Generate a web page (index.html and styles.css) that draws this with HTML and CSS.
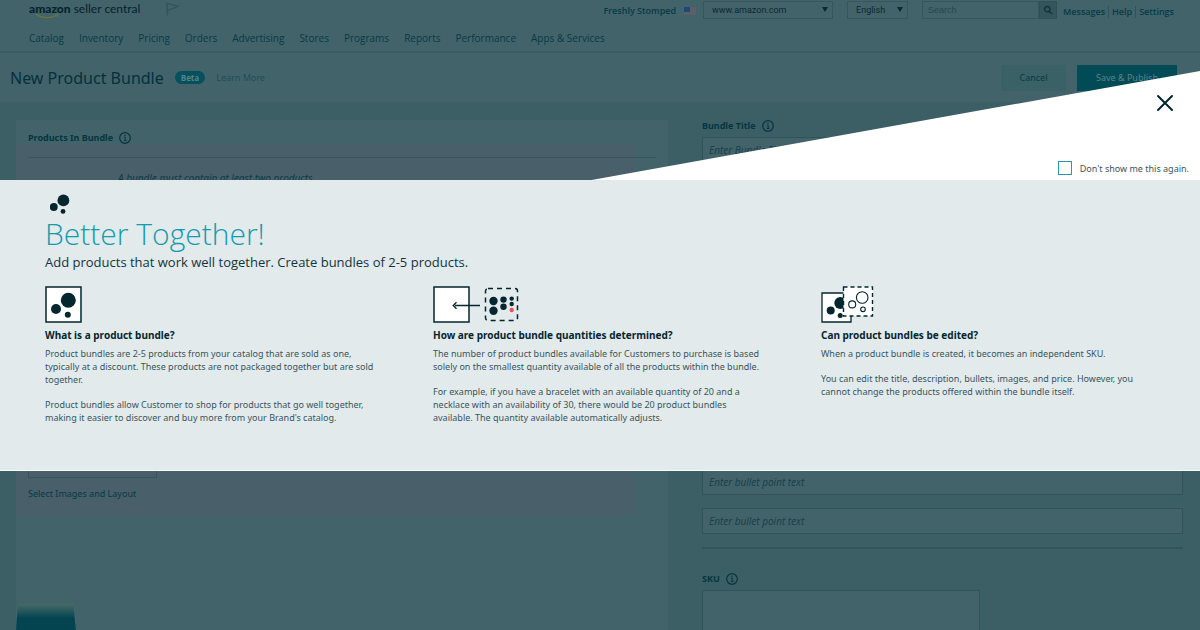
FILE: index.html
```html
<!DOCTYPE html>
<html lang="en">
<head>
<meta charset="utf-8">
<title>New Product Bundle</title>
<link rel="stylesheet" href="styles.css">
</head>
<body>
<svg class="defs" aria-hidden="true">
  <symbol id="info" viewBox="0 0 12 12">
    <circle cx="6" cy="6" r="5.3" fill="none" stroke="currentColor" stroke-width="1.2"/>
    <path d="M5 5.2h1.2V8.6M4.9 8.6h2.5" fill="none" stroke="currentColor"/>
    <circle cx="6" cy="3.3" r=".7" fill="currentColor"/>
  </symbol>
</svg>

<div class="page">
  <header class="header">
    <div class="topbar">
      <a class="logo" href="#"><b>amazon</b> <span>seller central</span>
        <svg class="smile" viewBox="0 0 25 6" aria-hidden="true"><path d="M1 1.2C7 5.6 16 5.8 21.5 2.2" fill="none" stroke="currentColor" stroke-width="1.3"/><path d="M19.5 1.2l3.4-.2-.6 3" fill="none" stroke="currentColor"/></svg>
      </a>
      <svg class="flag" viewBox="0 0 13 14" aria-hidden="true"><path d="M1.2 13.5V1.2L12 4.5 1.2 8.6" fill="none" stroke="currentColor" stroke-width="1.4"/></svg>
      <div class="tools">
        <b class="store">Freshly Stomped</b>
        <svg class="us" viewBox="0 0 12 8" aria-hidden="true"><path fill="#6d5964" d="M0 0h12v8H0z"/><path stroke="#54616b" d="M0 1.5h12M0 3.5h12M0 5.5h12M0 7.5h12"/><path fill="#1c4a76" d="M0 0h6v5H0z"/></svg>
        <span class="pick pick-site"><select aria-label="Marketplace"><option>www.amazon.com</option></select></span>
        <span class="pick pick-lang"><select aria-label="Language"><option>English</option></select></span>
        <form class="search">
          <input type="text" placeholder="Search" aria-label="Search">
          <button type="button" aria-label="Search"><svg viewBox="0 0 10 10"><circle cx="4.2" cy="4.2" r="2.7" fill="none" stroke="currentColor" stroke-width="1.4"/><path d="M6.2 6.2L9 9" stroke="currentColor" stroke-width="1.6"/></svg></button>
        </form>
        <div class="links"><a href="#">Messages</a><a href="#">Help</a><a href="#">Settings</a></div>
      </div>
    </div>
    <nav class="nav">
      <a href="#">Catalog</a><a href="#">Inventory</a><a href="#">Pricing</a><a href="#">Orders</a><a href="#">Advertising</a><a href="#">Stores</a><a href="#">Programs</a><a href="#">Reports</a><a href="#">Performance</a><a href="#">Apps &amp; Services</a>
    </nav>
  </header>

  <div class="titlebar">
    <h1>New Product Bundle</h1>
    <span class="beta">Beta</span>
    <a class="learn" href="#">Learn More</a>
    <button class="btn cancel" type="button">Cancel</button>
    <button class="btn publish" type="button">Save &amp; Publish</button>
  </div>

  <main class="main">
    <section class="card">
      <h2>Products In Bundle <svg class="info"><use href="#info"/></svg></h2>
      <p class="hint">A bundle must contain at least two products.</p>
      <div class="images">
        <div class="image-box"></div>
        <a href="#">Select Images and Layout</a>
      </div>
      <div class="thumb"></div>
    </section>
    <section class="form">
      <label class="label" for="title">Bundle Title <svg class="info"><use href="#info"/></svg></label>
      <input class="field" id="title" type="text" placeholder="Enter Bundle Title">
      <div class="bullets">
        <input class="field" type="text" placeholder="Enter bullet point text" aria-label="Bullet point 1">
        <input class="field" type="text" placeholder="Enter bullet point text" aria-label="Bullet point 2">
      </div>
      <hr>
      <label class="label" for="sku">SKU <svg class="info"><use href="#info"/></svg></label>
      <textarea class="field sku" id="sku"></textarea>
    </section>
  </main>
</div>

<div class="modal" role="dialog" aria-labelledby="headline">
  <div class="wedge">
    <button class="close" type="button" aria-label="Close"><svg viewBox="0 0 18 18"><path d="M2 2l14 14M16 2L2 16" stroke="currentColor" stroke-width="2" stroke-linecap="round"/></svg></button>
    <label class="again"><input type="checkbox"> Don't show me this again.</label>
  </div>
  <div class="panel">
    <svg class="dots" viewBox="0 0 20 20" aria-hidden="true"><circle cx="13.4" cy="6.4" r="5.9"/><circle cx="3.8" cy="13" r="3.9"/><circle cx="13" cy="17.4" r="2.4"/></svg>
    <h2 id="headline">Better Together!</h2>
    <p class="lead">Add products that work well together. Create bundles of 2-5 products.</p>
    <div class="columns">
      <section>
        <svg class="art" viewBox="0 0 60 37" aria-hidden="true"><path d="M1 1h35v35H1z" fill="#fff" stroke="#04262e" stroke-width="1.5"/><circle cx="23.3" cy="14.3" r="7.5"/><circle cx="11" cy="23" r="5"/><circle cx="22.8" cy="28.8" r="3"/></svg>
        <h3>What is a product bundle?</h3>
        <p>Product bundles are 2-5 products from your catalog that are sold as one,<br>typically at a discount. These products are not packaged together but are sold<br>together.</p>
        <p>Product bundles allow Customer to shop for products that go well together,<br>making it easier to discover and buy more from your Brand's catalog.</p>
      </section>
      <section>
        <svg class="art wide" viewBox="0 0 90 37" aria-hidden="true"><path d="M1 1h35v35H1z" fill="#fff" stroke="#04262e" stroke-width="1.5"/><path d="M47 19.5H22M23.5 16.3l-3.3 3.2 3.3 3.2" fill="none" stroke="#04262e" stroke-width="1.3"/><rect x="52.5" y="2.5" width="32" height="32" rx="2.5" fill="none" stroke="#04262e" stroke-width="1.5" stroke-dasharray="5 4"/><circle cx="60.5" cy="15" r="4.2"/><circle cx="60.5" cy="24.8" r="4.2"/><circle cx="70.5" cy="13.6" r="3.2"/><circle cx="70.5" cy="20.8" r="3.2"/><circle cx="78.7" cy="12.6" r="2.2"/><circle cx="78.7" cy="18" r="2.2"/><circle class="low" cx="78.7" cy="24" r="2.2"/></svg>
        <h3>How are product bundle quantities determined?</h3>
        <p>The number of product bundles available for Customers to purchase is based<br>solely on the smallest quantity available of all the products within the bundle.</p>
        <p>For example, if you have a bracelet with an available quantity of 20 and a<br>necklace with an availability of 30, there would be 20 product bundles<br>available. The quantity available automatically adjusts.</p>
      </section>
      <section>
        <svg class="art" viewBox="0 0 60 37" aria-hidden="true"><path d="M1 7h29v29H1z" fill="#fff" stroke="#04262e" stroke-width="1.3"/><circle cx="19.3" cy="17" r="6"/><circle cx="9.7" cy="24.6" r="4"/><circle cx="19.2" cy="29.4" r="2.5"/><path d="M22.5 1h29v29h-29z" fill="#fff" stroke="#04262e" stroke-width="1.4" stroke-dasharray="4 3"/><g fill="none" stroke="#04262e"><circle cx="41.2" cy="11.5" r="5.8" stroke-width="1.1"/><circle cx="31.2" cy="18.4" r="3.5" stroke-width="1.1"/><circle cx="42" cy="23.3" r="2.3" stroke-width="1.1"/></g></svg>
        <h3>Can product bundles be edited?</h3>
        <p>When a product bundle is created, it becomes an independent SKU.</p>
        <p>You can edit the title, description, bullets, images, and price. However, you<br>cannot change the products offered within the bundle itself.</p>
      </section>
    </div>
  </div>
</div>
</body>
</html>
```

FILE: styles.css
```css
* { box-sizing: border-box; }
body {
  margin: 0;
  position: relative;
  height: 100vh;
  overflow: hidden;
  background: #3c5f66;
  color: #063b47;
  font: 9px/13px "Noto Sans", "Open Sans", sans-serif;
}
h1, h2, h3, p { margin: 0; }
a { color: inherit; text-decoration: none; }
button, input, select, textarea { font: inherit; color: inherit; border-radius: 0; margin: 0; }
.defs { display: none; }

/* Header */
.header { background: #43636a; border-bottom: 2px solid #3a5b63; }
.topbar { display: flex; align-items: flex-start; padding-left: 29px; height: 28px; }
.logo { position: relative; font: 12px/18px Lato, sans-serif; color: #03222c; white-space: nowrap; }
.logo b { font-weight: 900; }
.smile { position: absolute; left: 6px; top: 13px; width: 25px; height: 6px; color: #6a7440; }
.flag { width: 13px; height: 14px; margin: 2px 0 0 26px; color: #33555c; }
.tools { display: flex; align-items: flex-start; margin-left: auto; padding: 1px 26px 0 0; font-family: "Open Sans", "Noto Sans", sans-serif; }
.store { line-height: 20px; font-weight: 600; }
.us { width: 12px; height: 8px; margin: 6px 7px 0 8px; }
.pick { position: relative; height: 18px; border: 1px solid #36575f; color: #0c2931; }
.pick::after { content: ""; position: absolute; right: 4px; top: 5px; border: 3px solid transparent; border-top: 5px solid #0c2931; border-bottom: 0; }
.pick select { width: 100%; height: 16px; padding: 0 8px; border: 0; background: none; appearance: none; font: 9px/16px Roboto, "Liberation Sans", sans-serif; }
.pick-site { width: 130px; }
.pick-lang { width: 61px; margin: 0 14px; }
.search { display: flex; width: 135px; height: 18px; }
.search input { flex: 1; min-width: 0; padding: 0 5px; border: 1px solid #36575f; background: none; font: 9px "Liberation Sans", sans-serif; }
.search input::placeholder { color: #234850; opacity: 1; }
.search button { display: flex; justify-content: center; align-items: center; width: 18px; padding: 0; border: 1px solid #304f57; background: #34555c; color: #15343c; }
.search svg { width: 10px; height: 10px; }
.links { display: flex; padding: 5px 0 0 6px; font-weight: 600; line-height: 12px; }
.links a + a { margin-left: 3px; padding-left: 3px; border-left: 1px solid #31545c; }
.nav { display: flex; gap: 15px; height: 23px; padding: 2px 29px 0; font: 10px/16px "Open Sans", "Noto Sans", sans-serif; white-space: nowrap; }

/* Title bar */
.titlebar { display: flex; align-items: center; height: 49px; padding: 0 23px 0 10px; background: #43636a; }
h1 { font-size: 16px; line-height: 24px; font-weight: 400; color: #04313c; }
.beta { margin-left: 11px; padding: 0 6px; border-radius: 7px; background: #04505c; color: #57828a; font: 700 8px/13px "Open Sans", "Noto Sans", sans-serif; }
.learn { margin: 0 auto 0 11px; color: #1b4f5a; }
.btn { height: 26px; border: 0; }
.cancel { width: 65px; margin-right: 11px; background: #3a6166; }
.publish { width: 100px; background: #004b56; color: #638087; }

/* Form page */
.main { display: flex; gap: 34px; padding: 18px 17px 0 16px; }
.card {
  width: 652px;
  max-width: 56%;
  height: 530px;
  padding: 11px 12px;
  background: linear-gradient(#495f69, #495f69) 0 24px / 95% 371px no-repeat #43636a;
}
.card h2, .label { display: flex; align-items: center; font-size: 9px; line-height: 14px; font-weight: 700; color: #063540; }
.card h2 { padding-bottom: 12px; border-bottom: 1px solid #36575f; }
.info { width: 12px; height: 12px; margin-left: 6px; }
.hint { padding: 14px 0 0 90px; font: italic 10px/13px "Open Sans", "Noto Sans", sans-serif; }
.images { padding-top: 265px; }
.image-box { width: 129px; height: 28px; margin-bottom: 9px; border: 1px solid #36575f; }
.thumb { width: 60px; height: 26px; margin: 104px 0 0 -12px; background: linear-gradient(#466b68, #034450 14px); clip-path: polygon(2px 0, 57px 0, 100% 100%, 0 100%); }
.form { flex: 1; }
.field { display: block; width: 100%; height: 26px; padding: 0 6px; border: 1px solid #31545c; background: #43636a; }
.field::placeholder { color: #163f48; opacity: 1; font: italic 10px "Open Sans", "Noto Sans", sans-serif; }
.label { margin-bottom: 5px; line-height: 12px; }
.bullets { display: grid; gap: 13px; margin-top: 306px; }
.form hr { margin: 13px 0 24px; border: 0; border-top: 2px solid #31545c; }
.sku { width: 278px; height: 60px; resize: none; }

/* Modal */
.modal { position: absolute; top: 71px; left: 0; right: 0; color: #3a555c; }
.wedge { display: flex; flex-direction: column; align-items: flex-end; justify-content: space-between; height: 109px; padding: 23px 11px 5px; background: #fff; clip-path: polygon(100% 0, 100% 100%, 49.3% 100%); }
.close { width: 18px; height: 18px; margin-right: 15px; padding: 0; border: 0; background: none; color: #04262e; }
.close svg { display: block; }
.again { display: flex; align-items: center; gap: 8px; }
.again input { appearance: none; width: 14px; height: 14px; border: 1px solid #2d93a8; background: #fff; }
.panel { height: 291px; padding: 14px 45px 0; background: #e2eaec; border-bottom: 1px solid #f6fbfb; }
.dots { display: block; width: 20px; height: 20px; margin-left: 5px; }
.panel svg { fill: #04262e; }
.panel .low { fill: #f0544c; }
.panel h2 { font-family: "Open Sans", "Noto Sans", sans-serif; font-size: 30px; line-height: 40px; font-weight: 300; color: #149bae; }
.lead { font: 13px/16px "Open Sans", "Noto Sans", sans-serif; color: #14343c; }
.columns { display: grid; grid-template-columns: repeat(3, 1fr); gap: 54px; margin-top: 16px; white-space: nowrap; }
.art { display: block; width: 60px; height: 37px; }
.wide { width: 90px; }
.columns h3 { margin: 5px 0; font-size: 10px; line-height: 14px; color: #04262e; }
.columns p + p { margin-top: 12px; }
```
